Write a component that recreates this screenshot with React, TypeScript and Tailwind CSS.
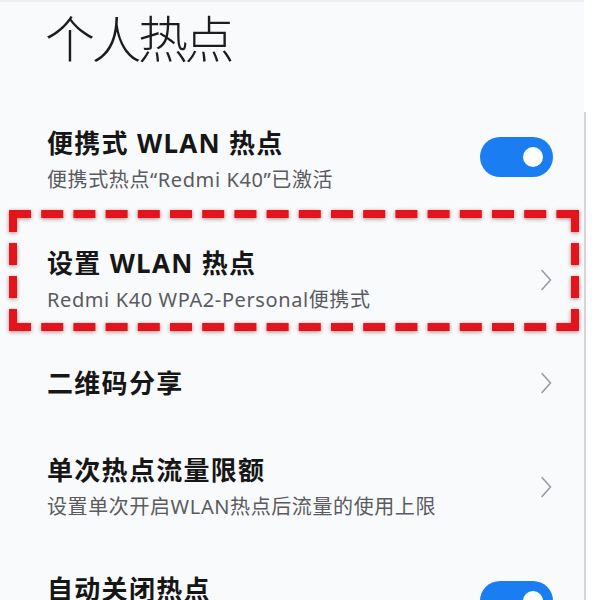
const font = { fontFamily: '"Noto Sans", "Noto Sans CJK SC", sans-serif' };

function Toggle() {
  return (
    <div className="flex h-[40px] w-[73px] shrink-0 items-center justify-end rounded-full bg-[#1a7ef2] pr-[10px]">
      <div className="h-[20px] w-[20px] rounded-full bg-white" />
    </div>
  );
}

function Chevron() {
  return (
    <svg width="12" height="22" viewBox="0 0 12 22" className="mr-[1px] shrink-0">
      <path d="M2 1.5 L10.5 11 L2 20.5" fill="none" stroke="#9a9ca3" strokeWidth="1.6" strokeLinecap="round" strokeLinejoin="round" />
    </svg>
  );
}

function Row({
  title,
  sub,
  right,
}: {
  title: string;
  sub?: string;
  right: 'toggle' | 'chevron';
}) {
  return (
    <div className="flex shrink-0 items-center justify-between pl-[47px] pr-[31px] pt-[27px] pb-[28px]">
      <div className="flex flex-col">
        <div className="text-[26px] font-bold leading-[32px] tracking-[1.3px] text-[#161616]">{title}</div>
        {sub && (
          <div className="mt-[8px] text-[20px] leading-[25px] tracking-[0.6px] text-[#5a5a60]">{sub}</div>
        )}
      </div>
      {right === 'toggle' ? (
        <div className="mb-[6px]">
          <Toggle />
        </div>
      ) : (
        <Chevron />
      )}
    </div>
  );
}

export default function App() {
  return (
    <div className="relative flex h-[600px] w-[600px] overflow-hidden bg-white" style={font}>
      <div className="flex w-[584px] shrink-0 flex-col border-t-2 border-[#eceef1] bg-[#f9fafc]">
        <div className="h-[98px] shrink-0 pl-[45px] pt-[8px] text-[50px] font-light leading-[58px] tracking-[-3.5px] text-[#1c1c1c]">
          个人热点
        </div>
        <Row title="便携式 WLAN 热点" sub="便携式热点“Redmi K40”已激活" right="toggle" />
        <Row title="设置 WLAN 热点" sub="Redmi K40 WPA2-Personal便携式" right="chevron" />
        <Row title="二维码分享" right="chevron" />
        <Row title="单次热点流量限额" sub="设置单次开启WLAN热点后流量的使用上限" right="chevron" />
        <div className="flex shrink-0 items-start justify-between pl-[47px] pr-[31px] pt-[26px]">
          <div className="text-[26px] font-bold leading-[32px] tracking-[1.3px] text-[#161616]">自动关闭热点</div>
          <div className="mt-[8px]">
            <Toggle />
          </div>
        </div>
      </div>
      <div className="mt-[112px] w-[2px] shrink-0 bg-[#d4d6da]" />
      <div className="flex-1 bg-white" />

      {/* red dashed annotation */}
      <svg
        className="pointer-events-none absolute left-0 top-0"
        width="600"
        height="600"
        style={{ filter: 'drop-shadow(0 1px 2px rgba(90,0,0,0.45))' }}
      >
        <g stroke="#e3141c" strokeWidth="8" fill="none">
          <line x1="9" y1="214" x2="579" y2="214" strokeDasharray="22 10.2" />
          <line x1="9" y1="327" x2="579" y2="327" strokeDasharray="22 10.2" />
          <line x1="13" y1="210" x2="13" y2="331" strokeDasharray="22 11" />
          <line x1="575" y1="210" x2="575" y2="331" strokeDasharray="22 11" />
        </g>
      </svg>
    </div>
  );
}
